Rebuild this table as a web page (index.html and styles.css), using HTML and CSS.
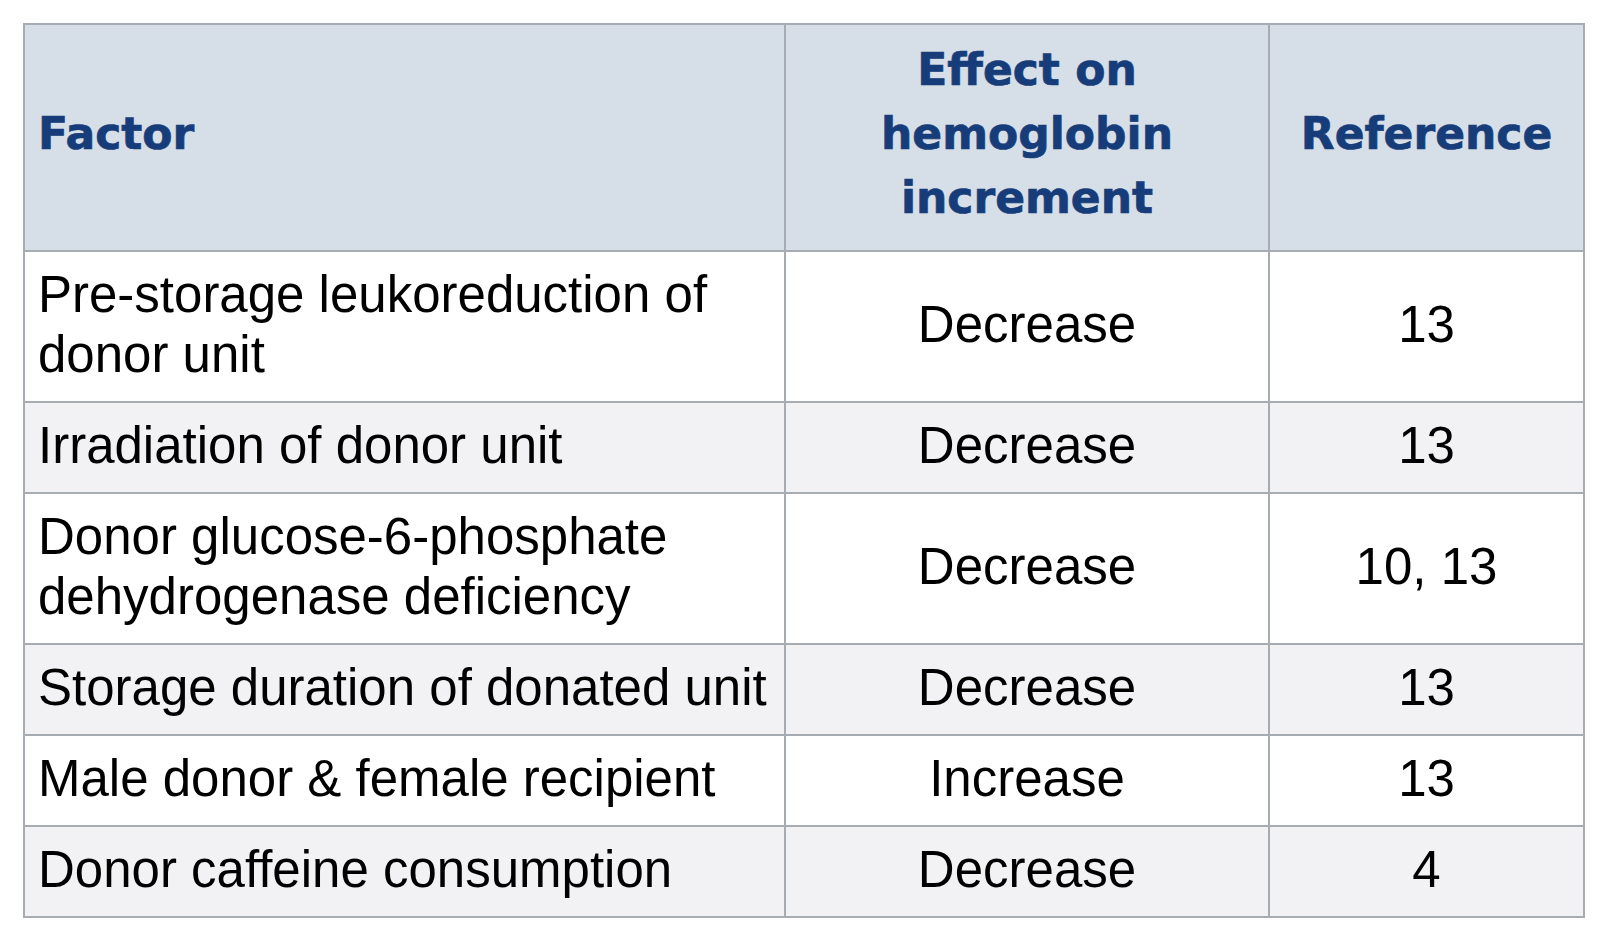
FILE: index.html
```html
<!DOCTYPE html>
<html lang="en">
<head>
<meta charset="utf-8">
<title>Factors affecting hemoglobin increment</title>
<link rel="stylesheet" href="styles.css">
</head>
<body>
<table class="factors">
  <colgroup>
    <col class="col-factor">
    <col class="col-effect">
    <col class="col-ref">
  </colgroup>
  <thead>
    <tr>
      <th class="left">Factor</th>
      <th>Effect on<br>hemoglobin<br>increment</th>
      <th>Reference</th>
    </tr>
  </thead>
  <tbody>
    <tr>
      <td class="left">Pre-storage leukoreduction of<br>donor unit</td>
      <td>Decrease</td>
      <td>13</td>
    </tr>
    <tr>
      <td class="left">Irradiation of donor unit</td>
      <td>Decrease</td>
      <td>13</td>
    </tr>
    <tr>
      <td class="left">Donor glucose-6-phosphate<br>dehydrogenase deficiency</td>
      <td>Decrease</td>
      <td>10, 13</td>
    </tr>
    <tr>
      <td class="left">Storage duration of donated unit</td>
      <td>Decrease</td>
      <td>13</td>
    </tr>
    <tr>
      <td class="left">Male donor &amp; female recipient</td>
      <td>Increase</td>
      <td>13</td>
    </tr>
    <tr>
      <td class="left">Donor caffeine consumption</td>
      <td>Decrease</td>
      <td>4</td>
    </tr>
  </tbody>
</table>
</body>
</html>
```

FILE: styles.css
```css
html, body {
  margin: 0;
  background: #ffffff;
}

body {
  padding: 23px 0 0 23px;
}

.factors {
  border-collapse: collapse;
  width: 1560px;
  table-layout: fixed;
  border: 2px solid #a7acb3;
}

.col-factor { width: 761px; }
.col-effect { width: 484px; }
.col-ref { width: 315px; }

.factors th,
.factors td {
  border: 2px solid #a7acb3;
  text-align: center;
  vertical-align: middle;
}

.factors th {
  background: #d6dee7;
  color: #163d79;
  font-family: "DejaVu Sans", "Verdana", sans-serif;
  font-weight: bold;
  font-size: 44px;
  line-height: 64px;
  padding: 13px 13px 20px 13px;
  -webkit-text-stroke: 0.7px #163d79;
}

.factors td {
  color: #000000;
  font-family: "Liberation Sans", Arial, sans-serif;
  font-size: 51px;
  line-height: 60px;
  padding: 13px 13px 16px 13px;
}

.factors .left {
  text-align: left;
}

.factors tbody tr:nth-child(even) td {
  background: #f2f2f4;
}
```
